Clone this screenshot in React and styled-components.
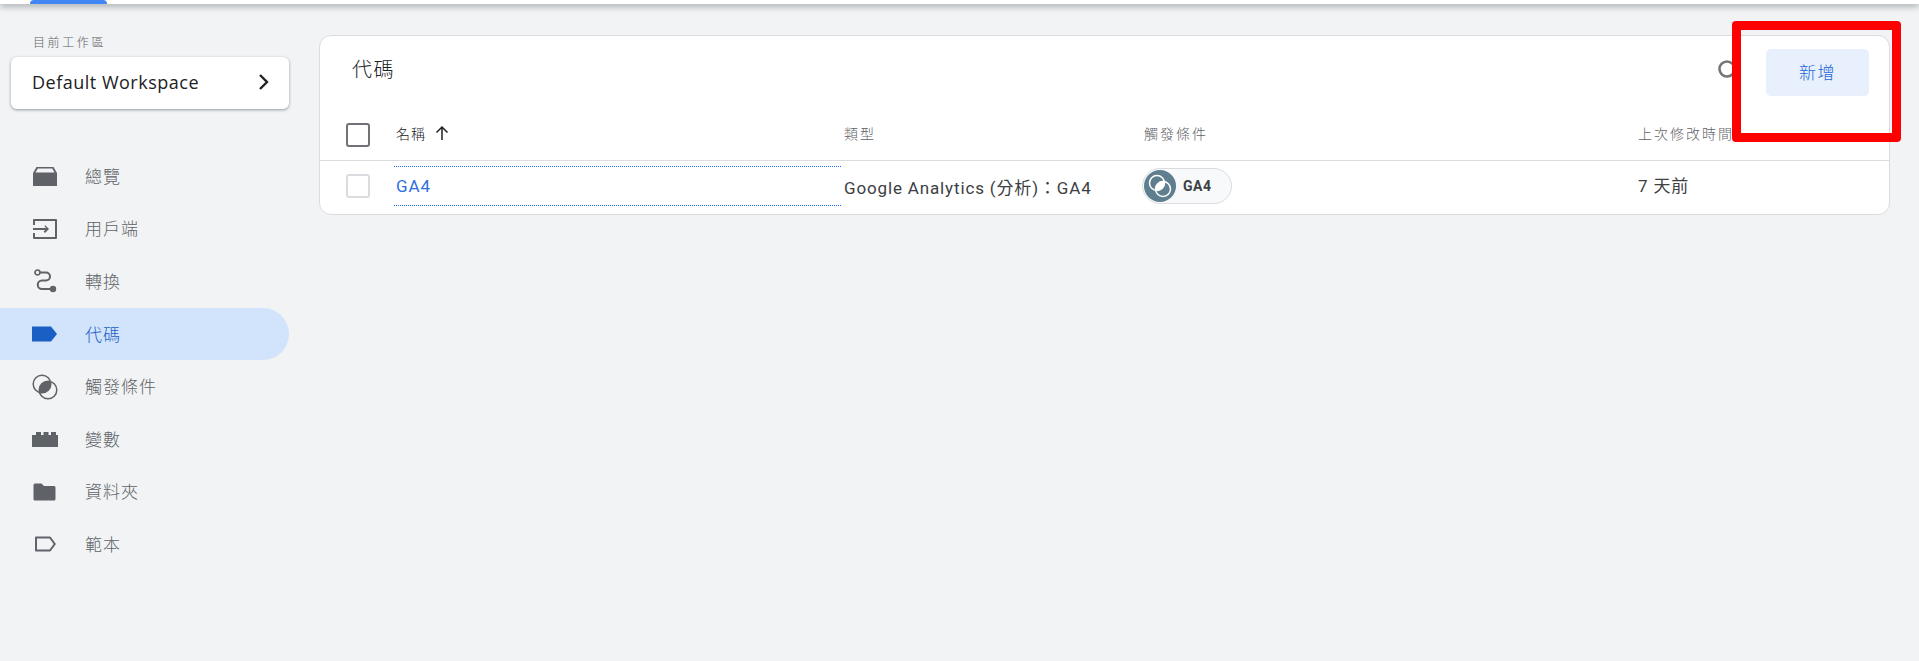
import React from 'react';
import styled, { createGlobalStyle } from 'styled-components';

const fontStack = `Roboto, "Noto Sans CJK TC", sans-serif`;

const GlobalStyle = createGlobalStyle`
  html, body {
    margin: 0;
    padding: 0;
    background: #f1f3f4;
    font-family: ${fontStack};
    overflow: hidden;
  }
`;

const Page = styled.div`
  position: relative;
  width: 1919px;
  height: 661px;
  background: #f1f3f4;
  overflow: hidden;
`;

const TopBar = styled.div`
  height: 4px;
  background: #fff;
  box-shadow: 0 2px 6px rgba(60, 64, 67, 0.55);
  padding-left: 30px;
`;

const TopTab = styled.div`
  width: 77px;
  height: 4px;
  background: #4285f4;
  border-radius: 4px 4px 0 0;
`;

const Body = styled.div`
  display: flex;
  align-items: flex-start;
`;

const Sidebar = styled.aside`
  width: 289px;
  flex: none;
  margin-right: 30px;
  padding-top: 31px;
`;

const WorkspaceLabel = styled.div`
  margin-left: 33px;
  height: 16px;
  font-size: 12px;
  line-height: 16px;
  letter-spacing: 2.6px;
  font-weight: 300;
  color: #5f6368;
`;

const WorkspaceCard = styled.div`
  margin: 6px 0 0 11px;
  height: 52px;
  box-sizing: border-box;
  padding: 0 19px 2px 21px;
  display: flex;
  align-items: center;
  justify-content: space-between;
  background: #fff;
  border-radius: 6px;
  box-shadow: 0 1px 3px rgba(60, 64, 67, 0.5);
  font-family: "Open Sans", sans-serif;
  font-size: 18px;
  font-weight: 500;
  letter-spacing: 0.5px;
  color: #202124;
`;

const Nav = styled.nav`
  margin-top: 41px;
  display: flex;
  flex-direction: column;
`;

const NavRow = styled.div`
  height: 52.6px;
  display: flex;
  align-items: center;
  padding-left: 32px;
  border-radius: 0 26px 26px 0;
  background: ${p => (p.$active ? '#d2e3fc' : 'transparent')};
  color: ${p => (p.$active ? '#1a5fc4' : '#5f6368')};
`;

const NavIcon = styled.svg`
  width: 26px;
  height: 26px;
  flex: none;
  margin-right: 27px;
  fill: currentColor;
`;

const NavText = styled.span`
  font-size: 17px;
  font-weight: 300;
  letter-spacing: 1px;
  position: relative;
  top: -1px;
`;

const Card = styled.main`
  width: 1571px;
  height: 180px;
  margin-top: 31px;
  box-sizing: border-box;
  background: #fff;
  border: 1px solid #dadce0;
  border-radius: 12px;
  display: flex;
  flex-direction: column;
`;

const CardHead = styled.div`
  height: 74px;
  display: flex;
  align-items: center;
  padding: 0 20px 0 32px;
`;

const CardTitle = styled.h2`
  flex: 1;
  margin: 0 0 10px;
  font-size: 20px;
  font-weight: 300;
  letter-spacing: 1.4px;
  color: #202124;
`;

const SearchIcon = styled.svg`
  width: 26px;
  height: 26px;
  margin: 0 26px 8px 0;
  fill: none;
  stroke: #757575;
  stroke-width: 2.6;
`;

const AddButton = styled.button`
  width: 103px;
  height: 47px;
  margin-bottom: 1px;
  padding: 0 0 3px;
  border: 0;
  border-radius: 5px;
  background: #e8f0fe;
  color: #1a66d4;
  font-family: ${fontStack};
  font-size: 17px;
  font-weight: 300;
  letter-spacing: 1.5px;
`;

const columns = '76px 448px 300px 494px 1fr';

const HeadRow = styled.div`
  height: 50px;
  display: grid;
  grid-template-columns: ${columns};
  align-items: center;
  border-bottom: 1px solid #dadce0;
`;

const BodyRow = styled.div`
  flex: 1;
  display: grid;
  grid-template-columns: ${columns};
  align-items: center;
  padding-bottom: 3px;
`;

const CheckCell = styled.div`
  padding-left: 26px;
  display: flex;
`;

const Checkbox = styled.div`
  width: 24px;
  height: 24px;
  box-sizing: border-box;
  border: 2px solid ${p => (p.$muted ? '#dadce0' : '#6f7276')};
  border-radius: 3px;
`;

const HeadCell = styled.div`
  display: flex;
  align-items: center;
  gap: 8px;
  margin-bottom: 4px;
  font-size: 14px;
  font-weight: 300;
  letter-spacing: ${p => (p.$strong ? '1px' : '2px')};
  color: ${p => (p.$strong ? '#202124' : '#5f6368')};
`;

const SortArrow = styled.svg`
  width: 16px;
  height: 16px;
  fill: none;
  stroke: #202124;
  stroke-width: 1.5;
`;

const NameCell = styled.div`
  margin-left: -2px;
  padding-left: 2px;
  height: 40px;
  width: 447px;
  box-sizing: border-box;
  display: flex;
  align-items: center;
  border-top: 1px dotted #1a73e8;
  border-bottom: 1px dotted #1a73e8;
  font-size: 17px;
  letter-spacing: 0.9px;
  color: #2f6fe0;
`;

const TextCell = styled.div`
  font-size: 17px;
  font-weight: 400;
  letter-spacing: 0.85px;
  color: #3c4043;
`;

const AgeCell = styled(TextCell)`
  margin-bottom: 3px;
`;

const Chip = styled.div`
  width: 90px;
  height: 36px;
  margin-left: -2px;
  box-sizing: border-box;
  display: flex;
  align-items: center;
  gap: 7px;
  background: #f8f9fa;
  border: 1px solid #dadce0;
  border-radius: 18px;
  padding-left: 1px;
  font-size: 14px;
  font-weight: 700;
  letter-spacing: 0.5px;
  color: #3c4043;
`;

const ChipBadge = styled.svg`
  width: 32px;
  height: 32px;
  flex: none;
`;

// the red annotation drawn on top of the screenshot
const Annotation = styled.div`
  position: absolute;
  left: 1732px;
  top: 21px;
  width: 169px;
  height: 121px;
  box-sizing: border-box;
  border: 9px solid #ff0000;
  border-radius: 4px;
`;

// lens shape shared by the two overlapping circles of the trigger icon
const lens = (a, b, r) => {
  const d = Math.hypot(b - a, b - a);
  const h = Math.sqrt(r * r - (d * d) / 4);
  const mid = (a + b) / 2;
  const off = h / Math.SQRT2;
  return `M${mid - off} ${mid + off}A${r} ${r} 0 0 1 ${mid + off} ${mid - off}A${r} ${r} 0 0 1 ${mid - off} ${mid + off}z`;
};

const navItems = [
  {
    label: '總覽',
    icon: (
      <path
        d="M1 23V10L4.500 4h17L25 10v13zM3.500 9.500h19l-2.300-4H5.800z"
        fillRule="evenodd"
      />
    ),
  },
  {
    label: '用戶端',
    icon: (
      <path d="M2 3h22a1 1 0 0 1 1 1v18a1 1 0 0 1-1 1H2a1 1 0 0 1-1-1v-5h2v4h20V5H3v4H1V4a1 1 0 0 1 1-1zm11 6l4 4-4 4-1.400-1.400 1.600-1.600H1v-2h13.200l-1.600-1.600z" />
    ),
  },
  {
    label: '轉換',
    icon: (
      <>
        <circle cx="5.500" cy="4.500" r="2.500" fill="none" stroke="currentColor" strokeWidth="1.700" />
        <circle cx="21" cy="21" r="3.200" />
        <path
          d="M8 4.500h6a4 4 0 0 1 0 8h-4a3.500 3.500 0 0 0 0 8.500h8"
          fill="none"
          stroke="currentColor"
          strokeWidth="2"
        />
      </>
    ),
  },
  {
    label: '代碼',
    active: true,
    icon: <path d="M0 5.500h19l6 7.500-6 7.500H0z" />,
  },
  {
    label: '觸發條件',
    icon: (
      <>
        <circle cx="10" cy="10" r="8.800" fill="none" stroke="currentColor" strokeWidth="1.500" />
        <circle cx="16" cy="16" r="8.800" fill="none" stroke="currentColor" strokeWidth="1.500" />
        <path d={lens(10, 16, 8.8)} />
      </>
    ),
  },
  {
    label: '變數',
    icon: <path d="M0 9h4V6h5v3h2.500V6h5v3H19V6h5v3h2v12H0z" />,
  },
  {
    label: '資料夾',
    icon: <path d="M3 4.500h6.500l2.500 2.500h10a1.500 1.500 0 0 1 1.500 1.500V20a1.500 1.500 0 0 1-1.500 1.500H3A1.500 1.500 0 0 1 1.500 20V6A1.500 1.500 0 0 1 3 4.500z" />,
  },
  {
    label: '範本',
    icon: (
      <path
        d="M4 6.500h14l4.800 6.500-4.800 6.500H4z"
        fill="none"
        stroke="currentColor"
        strokeWidth="2"
        strokeLinejoin="round"
      />
    ),
  },
];

const App = () => (
  <Page>
    <GlobalStyle />
    <TopBar>
      <TopTab />
    </TopBar>
    <Body>
      <Sidebar>
        <WorkspaceLabel>目前工作區</WorkspaceLabel>
        <WorkspaceCard>
          Default Workspace
          <svg width="12" height="18" viewBox="0 0 12 18" fill="none" stroke="#202124" strokeWidth="2.400">
            <path d="M2 2l7 7-7 7" />
          </svg>
        </WorkspaceCard>
        <Nav>
          {navItems.map(item => (
            <NavRow key={item.label} $active={item.active}>
              <NavIcon viewBox="0 0 26 26">{item.icon}</NavIcon>
              <NavText>{item.label}</NavText>
            </NavRow>
          ))}
        </Nav>
      </Sidebar>
      <Card>
        <CardHead>
          <CardTitle>代碼</CardTitle>
          <SearchIcon viewBox="0 0 26 26">
            <circle cx="13" cy="13" r="7.500" />
            <path d="M18.500 18.500l6 6" />
          </SearchIcon>
          <AddButton>新增</AddButton>
        </CardHead>
        <HeadRow>
          <CheckCell>
            <Checkbox />
          </CheckCell>
          <HeadCell $strong>
            名稱
            <SortArrow viewBox="0 0 16 16">
              <path d="M8 15V2M2.500 7.500L8 2l5.500 5.500" />
            </SortArrow>
          </HeadCell>
          <HeadCell>類型</HeadCell>
          <HeadCell>觸發條件</HeadCell>
          <HeadCell>上次修改時間</HeadCell>
        </HeadRow>
        <BodyRow>
          <CheckCell>
            <Checkbox $muted />
          </CheckCell>
          <NameCell>GA4</NameCell>
          <TextCell>Google Analytics (分析)：GA4</TextCell>
          <div>
            <Chip>
              <ChipBadge viewBox="0 0 32 32">
                <circle cx="16" cy="16" r="16" fill="#5f7f90" />
                <circle cx="13" cy="13" r="7.500" fill="none" stroke="#fff" strokeWidth="1.500" />
                <circle cx="19" cy="19" r="7.500" fill="none" stroke="#fff" strokeWidth="1.500" />
                <path d={lens(13, 19, 7.5)} fill="#fff" />
              </ChipBadge>
              GA4
            </Chip>
          </div>
          <AgeCell>7 天前</AgeCell>
        </BodyRow>
      </Card>
    </Body>
    <Annotation />
  </Page>
);

export default App;
